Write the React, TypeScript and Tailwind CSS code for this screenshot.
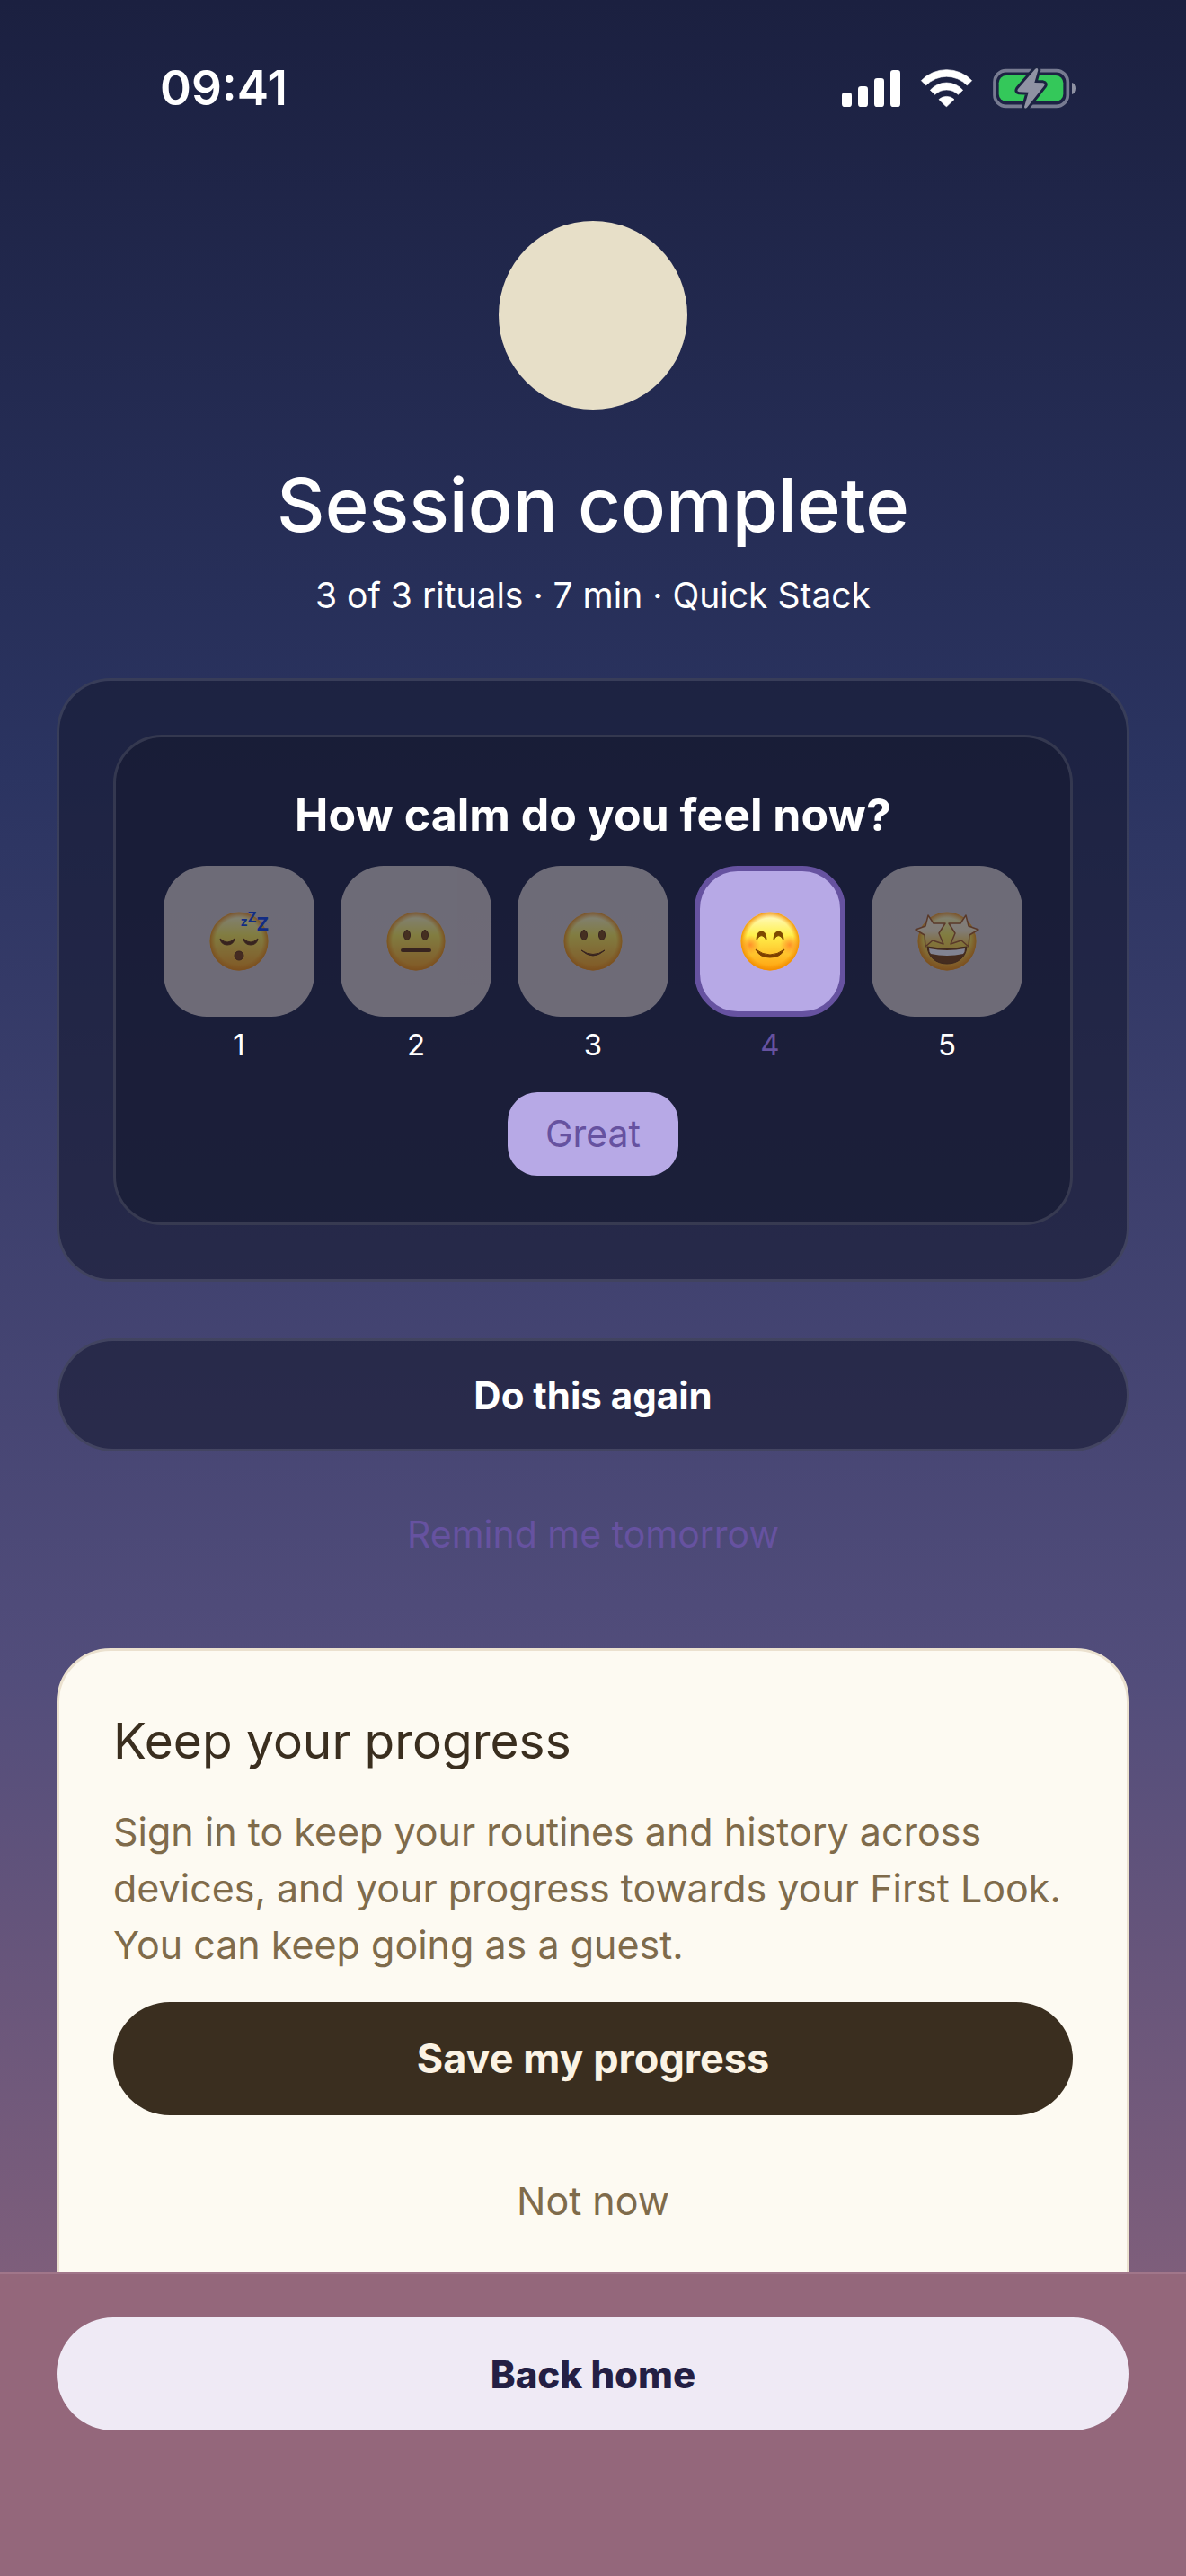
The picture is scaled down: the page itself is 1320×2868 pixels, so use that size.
import { useState } from "react";
import type { ReactNode } from "react";

const moods = [
  { value: 1, label: "Sleepy", face: <SleepingFace /> },
  { value: 2, label: "Neutral", face: <NeutralFace /> },
  { value: 3, label: "Good", face: <SmilingFace /> },
  { value: 4, label: "Great", face: <BlushingFace /> },
  { value: 5, label: "Amazing", face: <StarFace /> },
];

function StatusIcons() {
  return (
    <svg viewBox="108 66 792 144" className="h-12 w-[264px]" aria-hidden="true">
      {/* Signal */}
      <g fill="#fff">
        <rect x="111" y="153" width="33" height="48" rx="10" />
        <rect x="165" y="132" width="33" height="69" rx="10" />
        <rect x="219" y="105" width="33" height="96" rx="10" />
        <rect x="273" y="78" width="33" height="123" rx="10" />
      </g>
      {/* Wifi */}
      <g fill="#fff" stroke="#fff" strokeWidth="2" strokeLinejoin="round">
        <path d="M376 113 A117 117 0 0 1 545 113 L529 129 A95 95 0 0 0 392 129 Z" />
        <path d="M406 145 A72 72 0 0 1 515 145 L499 160 A54 54 0 0 0 422 160 Z" />
        <path d="M435 176 A38 38 0 0 1 486 176 L462 199 Q460 201 458 199 Z" />
      </g>
      {/* Battery */}
      <rect x="621" y="80" width="244" height="119" rx="38" fill="none" stroke="#777b91" strokeWidth="11" />
      <rect x="635" y="96" width="215" height="87" rx="25" fill="#34c85a" />
      <path d="M879 120 Q894 124 894 139 Q894 155 879 159 Z" fill="#8f92a3" />
      <path
        d="M756 75 Q765 68 766 78 L754 120 L782 121 Q792 123 786 131 L729 203 Q721 209 720 201 L734 152 L703 151 Q694 149 699 141 Z"
        fill="#8f92a3"
        stroke="#1c2341"
        strokeWidth="18"
        strokeLinejoin="round"
        paintOrder="stroke"
      />
    </svg>
  );
}

function Face({ id, children }: { id: string; children: ReactNode }) {
  return (
    <svg viewBox="-36 -36 72 72" className="size-[72px] overflow-visible" aria-hidden="true">
      <defs>
        <linearGradient id={`${id}-fill`} x1="0" y1="0" x2="0" y2="1">
          <stop offset="0" stopColor="#fffbd0" />
          <stop offset="0.4" stopColor="#fff04a" />
          <stop offset="0.7" stopColor="#ffc62e" />
          <stop offset="1" stopColor="#ff9f0c" />
        </linearGradient>
        <radialGradient id={`${id}-edge`}>
          <stop offset="0.8" stopColor="#f59300" stopOpacity="0" />
          <stop offset="1" stopColor="#f08a00" stopOpacity="0.9" />
        </radialGradient>
      </defs>
      <circle r="32.5" fill={`url(#${id}-fill)`} />
      <circle r="32.5" fill={`url(#${id}-edge)`} />
      {children}
    </svg>
  );
}

function SleepingFace() {
  return (
    <Face id="sleeping">
      <path d="M-21 -3 Q-13 5 -5 -3 Q-6 4 -13 4 Q-20 4 -21 -3 Z" fill="#5c2b00" stroke="#5c2b00" />
      <path d="M5 -3 Q13 5 21 -3 Q20 4 13 4 Q6 4 5 -3 Z" fill="#5c2b00" stroke="#5c2b00" />
      <circle cy="16" r="5" fill="#7a3d05" stroke="#5c2b00" />
      <g fill="#0a3fe0" className="font-['Open_Sans',sans-serif] font-bold">
        <text x="2" y="-17" fontSize="15">z</text>
        <text x="10" y="-21" fontSize="16">Z</text>
        <text x="20" y="-12" fontSize="22">Z</text>
      </g>
    </Face>
  );
}

function NeutralFace() {
  return (
    <Face id="neutral">
      <ellipse cx="-10" cy="-7" rx="3.5" ry="5.5" fill="#7a4505" stroke="#5c2b00" />
      <ellipse cx="10" cy="-7" rx="3.5" ry="5.5" fill="#7a4505" stroke="#5c2b00" />
      <path d="M-15 10 H15" stroke="#5c2b00" strokeWidth="4" strokeLinecap="round" />
    </Face>
  );
}

function SmilingFace() {
  return (
    <Face id="smiling">
      <ellipse cx="-10" cy="-7" rx="3.5" ry="5.5" fill="#7a4505" stroke="#5c2b00" />
      <ellipse cx="10" cy="-7" rx="3.5" ry="5.5" fill="#7a4505" stroke="#5c2b00" />
      <path d="M-13 10 Q0 22 13 10 Q0 19 -13 10 Z" fill="#5c2b00" stroke="#5c2b00" strokeLinejoin="round" />
    </Face>
  );
}

function BlushingFace() {
  return (
    <Face id="blushing">
      <defs>
        <radialGradient id="blush">
          <stop offset="0" stopColor="#ff6a1f" stopOpacity="0.65" />
          <stop offset="1" stopColor="#ff7a1f" stopOpacity="0" />
        </radialGradient>
      </defs>
      <circle cx="-22" cy="4" r="11" fill="url(#blush)" />
      <circle cx="22" cy="4" r="11" fill="url(#blush)" />
      <path d="M-15 -1 C-15 -15 -4 -15 -4 -1 C-7 -8 -12 -8 -15 -1 Z" fill="#7d4a00" stroke="#7d4a00" strokeLinejoin="round" />
      <path d="M4 -1 C4 -15 15 -15 15 -1 C12 -8 7 -8 4 -1 Z" fill="#7d4a00" stroke="#7d4a00" strokeLinejoin="round" />
      <path d="M-16 9 Q0 21 16 9 Q12 18 0 18 Q-12 18 -16 9 Z" fill="#7d3f00" stroke="#7d3f00" strokeLinejoin="round" />
    </Face>
  );
}

function StarFace() {
  return (
    <Face id="star">
      <defs>
        <linearGradient id="star-eye" x1="0" y1="0" x2="0" y2="1">
          <stop offset="0" stopColor="#fff3d0" />
          <stop offset="0.5" stopColor="#fff0c0" />
          <stop offset="1" stopColor="#ffc820" />
        </linearGradient>
      </defs>
      <path d="M-22 6 Q0 10 22 6 C21 18 12 25 0 25 C-12 25 -21 18 -22 6 Z" fill="#7a4000" stroke="#6a3500" />
      <path d="M-20 8 Q0 12 20 8 Q20 12 18 14 Q0 18 -18 14 Q-20 12 -20 8 Z" fill="#fff" />
      <g fill="url(#star-eye)" stroke="#a85c18" strokeWidth="1.5" strokeLinejoin="round">
        <path d="M-21 -29 L-15 -20 L-2 -20 L-9 -9 L-4 3 L-16 -1 L-24 6 L-25 -7 L-35 -13 L-24 -17 Z" />
        <path d="M21 -29 L15 -20 L2 -20 L9 -9 L4 3 L16 -1 L24 6 L25 -7 L35 -13 L24 -17 Z" />
      </g>
    </Face>
  );
}

function MoodPicker() {
  const [selected, setSelected] = useState(4);
  const current = moods.find((m) => m.value === selected);

  return (
    <div className="rounded-[54px] border-3 border-white/12 bg-[#151931]/60 px-[53px] pt-14 pb-[52px]">
      <h2 id="mood-title" className="text-center text-[50px] leading-[60px] font-bold">
        How calm do you feel now?
      </h2>
      <div role="radiogroup" aria-labelledby="mood-title" className="mt-[27px] flex justify-between">
        {moods.map((mood) => {
          const active = mood.value === selected;
          return (
            <label key={mood.value} className="flex cursor-pointer flex-col items-center">
              <input
                type="radio"
                name="mood"
                value={mood.value}
                checked={active}
                onChange={() => setSelected(mood.value)}
                className="sr-only"
              />
              <span
                className={`flex size-[168px] items-center justify-center rounded-[48px] ${
                  active ? "border-6 border-[#6652a0] bg-[#b7a9e6]" : "bg-[#d4cac4] opacity-45"
                }`}
              >
                {mood.face}
              </span>
              <span className={`mt-2 text-[33px] leading-[46px] ${active ? "text-[#6652a0]" : "text-white"}`}>
                {mood.value}
              </span>
            </label>
          );
        })}
      </div>
      <div className="mt-[30px] flex justify-center">
        <span className="rounded-[33px] bg-[#b7a9e6] px-[42px] text-[41px] leading-[93px] text-[#6652a0]">
          {current?.label}
        </span>
      </div>
    </div>
  );
}

export default function App() {
  return (
    <div className="flex h-screen flex-col bg-[linear-gradient(180deg,#1b2040_0%,#2b3461_30%,#524d7b_65%,#94677b_100%)] font-['Inter',sans-serif] text-white">
      <div className="min-h-0 flex-1 overflow-y-auto [scrollbar-width:none]">
        {/* Status bar */}
        <header className="flex h-[196px] items-center justify-between pr-[120px] pl-[178px]">
          <time className="text-[53px] leading-[60px] font-semibold">09:41</time>
          <StatusIcons />
        </header>

        <main className="px-[63px] pt-[50px] pb-[63px]">
          {/* Summary */}
          <section className="flex flex-col items-center text-center">
            <div className="size-[210px] rounded-full bg-[#e7dfc8]" />
            <h1 className="mt-[52px] text-[83px] leading-[108px] font-medium">Session complete</h1>
            <p className="mt-5 text-[39px] leading-[54px]">3 of 3 rituals · 7 min · Quick Stack</p>
          </section>

          <section className="mt-[65px] rounded-[60px] border-3 border-white/12 bg-[#151931]/60 p-[60px]">
            <MoodPicker />
          </section>

          <div className="mt-[63px] flex flex-col gap-[30px]">
            <button
              type="button"
              className="h-[126px] rounded-full border-3 border-white/12 bg-[#151931]/60 text-[42px] font-bold"
            >
              Do this again
            </button>
            <button type="button" className="h-[126px] rounded-full text-[41px] text-[#6652a0]">
              Remind me tomorrow
            </button>
          </div>

          {/* Guest prompt */}
          <section className="mt-[63px] rounded-[60px] border-3 border-[#ebe1cf] bg-[#fdfaf2] px-[60px] pt-[60px] pb-24 text-[#7f6b4b]">
            <h2 className="text-[55px] leading-[80px] text-[#3a2e1f]">Keep your progress</h2>
            <p className="mt-[30px] text-[43px] leading-[63px]">
              Sign in to keep your routines and history across devices, and your progress towards your First Look. You
              can keep going as a guest.
            </p>
            <button
              type="button"
              className="mt-8 h-[126px] w-full rounded-full bg-[#3a2e1f] text-[45px] font-bold text-[#fbf3e4]"
            >
              Save my progress
            </button>
            <button type="button" className="mt-8 h-[126px] w-full rounded-full text-[43px]">
              Not now
            </button>
          </section>
        </main>
      </div>

      <footer className="border-t-3 border-[#a1768a] bg-[#94677b] px-[63px] pt-12 pb-[162px]">
        <button
          type="button"
          className="h-[126px] w-full rounded-full bg-[#efeaf5] text-[42px] font-extrabold text-[#241f44]"
        >
          Back home
        </button>
      </footer>
    </div>
  );
}
